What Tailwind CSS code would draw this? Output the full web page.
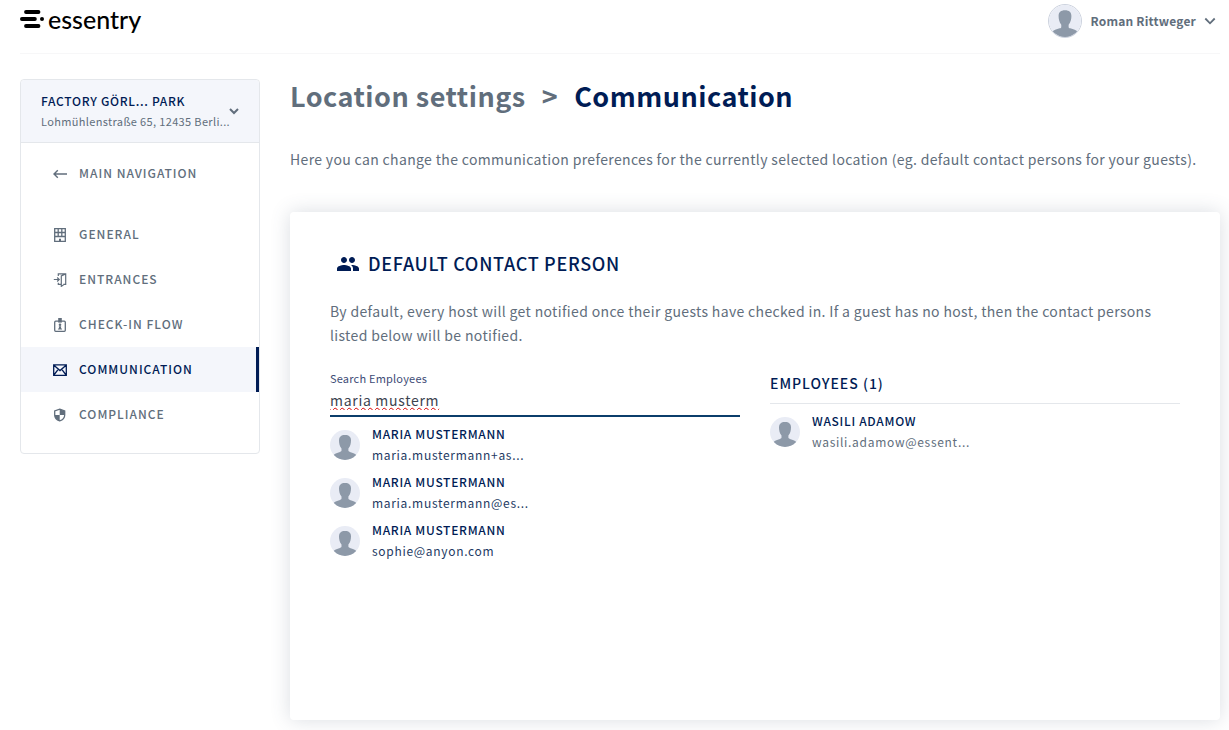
<!DOCTYPE html>
<html lang="en">
<head>
    <meta charset="utf-8">
    <meta name="viewport" content="width=device-width, initial-scale=1">
    <title>Location settings - Communication</title>
    <script src="https://cdn.jsdelivr.net/npm/@tailwindcss/browser@4"></script>
</head>
<body class="bg-white font-['Noto_Sans_CJK_SC','Open_Sans',sans-serif] text-[14px] tracking-wide text-[#616e7c]">

    <!-- Shared avatar -->
    <svg class="hidden">
        <symbol id="avatar" viewBox="0 0 30 30">
            <rect width="30" height="30" fill="#e9ecf5"/>
            <path fill="#8d99a8" d="M15 5c4 0 6 2 6 5.400 0 2.600-.6 6.200-2.600 8v2.200c0 .8.5 1 1.500 1.300 3 .9 6 1.900 7 3.600V31H3v-5.500c1-1.700 4-2.700 7-3.600 1-.3 1.500-.5 1.500-1.300v-2.200C9.600 16.600 9 13 9 10.400 9 7 11 5 15 5z"/>
        </symbol>
    </svg>

    <div class="pl-5 pr-[9px] pb-2.5">
        <!-- Header -->
        <header class="flex justify-between items-start h-[54px] border-b border-[#f7f7f8]">
            <a href="#" class="flex items-center gap-1 h-[38px] text-black">
                <svg class="w-6 h-[18px]" viewBox="0 0 24 18" fill="none" stroke="currentColor" stroke-width="3.800" stroke-linecap="round">
                    <path d="M6 2h12.500M1.900 9h13M6 16h12.500"/>
                    <circle cx="22" cy="9" r="2" fill="currentColor" stroke="none"/>
                </svg>
                <span class="font-['Lato',sans-serif] text-[25px] leading-6 font-medium tracking-normal">essentry</span>
            </a>
            <button class="flex items-center gap-2 h-[42px] pr-1 font-bold text-[12px] tracking-[0.2px]">
                <svg class="size-[34px] rounded-full border border-[#ccd2de]"><use href="#avatar"/></svg>
                Roman Rittweger
                <svg class="size-3" viewBox="0 0 12 12" fill="none" stroke="currentColor" stroke-width="1.800"><path d="M1.300 3.500L6 8.300l4.700-4.800"/></svg>
            </button>
        </header>

        <div class="flex items-start gap-[30px] pt-[25px]">
            <!-- Sidebar -->
            <aside class="w-[240px] shrink-0 border border-[#e4e7eb] rounded">
                <button class="flex w-full items-center justify-between h-[63px] pl-5 pr-5 bg-[#f4f6fb] border-b border-[#e4e7eb] rounded-t text-left">
                    <span class="whitespace-nowrap w-[188px]">
                        <span class="block text-[12px] leading-5 font-medium tracking-[0.7px] text-[#001c55]">FACTORY GÖRL... PARK</span>
                        <span class="block text-[11px] leading-5">Lohmühlenstraße 65, 12435 Berli...</span>
                    </span>
                    <svg class="size-[10px] shrink-0" viewBox="0 0 10 10" fill="none" stroke="currentColor" stroke-width="2"><path d="M1 3l4 4 4-4"/></svg>
                </button>
                <nav class="pt-2 pb-4 text-[12px] font-medium tracking-[1px]">
                    <a href="#" class="flex items-center gap-3 h-[45px] pl-8 mb-4">
                        <svg class="w-[14px] h-[14px]" viewBox="0 0 14 14" fill="none" stroke="currentColor" stroke-width="1.400"><path d="M14 7H1M4.800 3.200L1 7l3.800 3.800"/></svg>
                        <span class="pb-0.5">MAIN NAVIGATION</span>
                    </a>
                    <a href="#" class="flex items-center gap-3 h-[45px] pl-8">
                        <svg class="w-[14px] h-[14px]" viewBox="0 0 14 14" fill="none" stroke="currentColor" stroke-width="1.300"><path d="M1.700.7h10.600v12.600H1.700zM1.700 4.500h10.600M1.700 8.500h10.600M5.200.7v7.800M8.800.7v7.800"/><path stroke-width="2" d="M7 10.800v2.500"/></svg>
                        <span class="pb-0.5">GENERAL</span>
                    </a>
                    <a href="#" class="flex items-center gap-3 h-[45px] pl-8">
                        <svg class="w-[14px] h-[14px]" viewBox="0 0 14 14" fill="none" stroke="currentColor" stroke-width="1.200"><path d="M.8 6.500h5.400M4.200 4.500l2 2-2 2M5.300 3V.9h7.400v10.400h-2.400M5.300 9.800v1.500h2.800M12.700.9L8.300 3v10.300l2.200-1.400"/></svg>
                        <span class="pb-0.5">ENTRANCES</span>
                    </a>
                    <a href="#" class="flex items-center gap-3 h-[45px] pl-8">
                        <svg class="w-[14px] h-[14px]" viewBox="0 0 14 14" fill="none" stroke="currentColor" stroke-width="1.300"><rect x="1.700" y="3.200" width="10.600" height="10.100" rx="1"/><path fill="currentColor" stroke="none" d="M5.200 0h3.600v4.600H5.200z"/><circle cx="7" cy="6.800" r="1.300" fill="currentColor" stroke="none"/><path fill="currentColor" stroke="none" d="M5.800 8.200h2.400L8 9.800l1.200 1.600H4.800L6 9.800z"/></svg>
                        <span class="pb-0.5">CHECK-IN FLOW</span>
                    </a>
                    <a href="#" aria-current="page" class="flex items-center gap-3 h-[45px] pl-8 bg-[#f4f6fb] border-r-[3px] border-[#001c55] text-[#001c55]">
                        <svg class="w-[14px] h-[14px]" viewBox="0 0 14 14" fill="none" stroke="currentColor" stroke-width="1.300"><path d="M.7 1.900h12.600v10.400H.7zM.9 2.200L7 7.600l6.100-5.400M.9 12l4.300-5.600M13.100 12L8.800 6.400"/></svg>
                        <span class="pb-0.5">COMMUNICATION</span>
                    </a>
                    <a href="#" class="flex items-center gap-3 h-[45px] pl-8">
                        <svg class="w-[14px] h-[14px]" viewBox="0 0 14 14"><path fill="none" stroke="currentColor" stroke-width="1.300" d="M6.700 1.200l5 1.700v4c0 2.800-2.200 5-5 6-2.800-1-5-3.200-5-6v-4z"/><path fill="currentColor" d="M6.700 1.200l5 1.700v4h-5zM1.700 6.900h5v6c-2.800-1-5-3.200-5-6z"/></svg>
                        <span class="pb-0.5">COMPLIANCE</span>
                    </a>
                </nav>
            </aside>

            <!-- Content -->
            <main class="flex-1 min-w-0">
                <h1 class="flex gap-4 text-[27px] leading-[34px] font-bold tracking-[0.5px]">
                    <a href="#">Location settings</a>
                    <span>&gt;</span>
                    <span class="text-[#001c55]">Communication</span>
                </h1>
                <p class="mt-[34px] leading-6">Here you can change the communication preferences for the currently selected location (eg. default contact persons for your guests).</p>

                <section class="mt-[41px] min-h-[508px] px-10 pt-10 pb-10 bg-white rounded shadow-[0_0_20px_rgba(70,85,110,0.2)]">
                    <h2 class="flex items-center gap-2 h-6 pl-[6px] text-[18px] leading-6 font-medium tracking-[0.7px] text-[#001c55]">
                        <svg class="size-6" viewBox="0 0 24 24" fill="currentColor"><path d="M16 11c1.660 0 2.990-1.340 2.990-3S17.660 5 16 5s-3 1.340-3 3 1.340 3 3 3zm-8 0c1.660 0 2.990-1.340 2.990-3S9.660 5 8 5 5 6.340 5 8s1.340 3 3 3zm0 2c-2.330 0-7 1.170-7 3.500V19h14v-2.500C15 14.170 10.330 13 8 13zm8 0c-.29 0-.62.02-.97.05 1.160.84 1.970 1.970 1.970 3.450V19h6v-2.500c0-2.330-4.670-3.500-7-3.500z"/></svg>
                        <span class="pb-0.5">DEFAULT CONTACT PERSON</span>
                    </h2>
                    <p class="mt-[23px] leading-6">By default, every host will get notified once their guests have checked in. If a guest has no host, then the contact persons listed below will be notified.</p>

                    <div class="grid grid-cols-2 gap-[30px] mt-6">
                        <div>
                            <label for="search" class="block text-[11px] leading-[14px] tracking-[0.2px] text-[#3e4c76]">Search Employees</label>
                            <input id="search" type="text" value="maria musterm" class="block w-full h-8 border-b-2 border-[#0b3d6b] text-[14px] leading-[30px] tracking-[0.7px] text-[#3d4450] underline decoration-wavy decoration-1 decoration-[#d80000] underline-offset-1 outline-none">
                            <ul class="mt-1.5 text-[#001c55]">
                                <li class="flex items-center gap-3 h-12 pb-1">
                                    <svg class="size-[30px] rounded-full"><use href="#avatar"/></svg>
                                    <div class="pb-0.5 text-[12px] leading-[21px] tracking-[0.7px]">
                                        <p class="font-medium">MARIA MUSTERMANN</p>
                                        <p class="text-[#243a63]">maria.mustermann+as...</p>
                                    </div>
                                </li>
                                <li class="flex items-center gap-3 h-12 pb-1">
                                    <svg class="size-[30px] rounded-full"><use href="#avatar"/></svg>
                                    <div class="pb-0.5 text-[12px] leading-[21px] tracking-[0.7px]">
                                        <p class="font-medium">MARIA MUSTERMANN</p>
                                        <p class="text-[#243a63]">maria.mustermann@es...</p>
                                    </div>
                                </li>
                                <li class="flex items-center gap-3 h-12 pb-1">
                                    <svg class="size-[30px] rounded-full"><use href="#avatar"/></svg>
                                    <div class="pb-0.5 text-[12px] leading-[21px] tracking-[0.7px]">
                                        <p class="font-medium">MARIA MUSTERMANN</p>
                                        <p class="text-[#243a63]">sophie@anyon.com</p>
                                    </div>
                                </li>
                            </ul>
                        </div>
                        <div>
                            <h3 class="h-[33px] border-b border-[#e4e7eb] text-[14px] leading-6 font-medium tracking-[1px] text-[#001c55]">EMPLOYEES (1)</h3>
                            <ul class="mt-1.5">
                                <li class="flex items-center gap-3 h-12 pb-1">
                                    <svg class="size-[30px] rounded-full"><use href="#avatar"/></svg>
                                    <div class="pb-0.5 text-[12px] leading-[21px] tracking-[0.7px]">
                                        <p class="font-medium text-[#001c55]">WASILI ADAMOW</p>
                                        <p>wasili.adamow@essent...</p>
                                    </div>
                                </li>
                            </ul>
                        </div>
                    </div>
                </section>
            </main>
        </div>
    </div>
</body>
</html>
